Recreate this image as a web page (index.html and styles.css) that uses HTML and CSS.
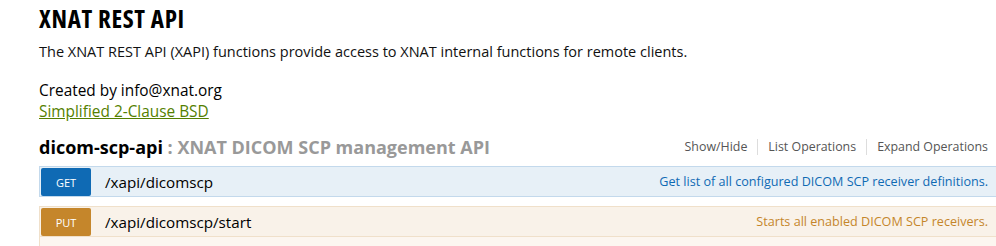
FILE: index.html
```html
<!DOCTYPE html>
<html>
<head>
<meta charset="utf-8">
<link rel="stylesheet" href="styles.css">
</head>
<body>
<div class="wrap">
  <div class="info">
    <div class="info-title">XNAT REST API</div>
    <div class="info-desc">The XNAT REST API (XAPI) functions provide access to XNAT internal functions for remote clients.</div>
    <div class="info-meta">
      <div>Created by info@xnat.org</div>
      <a class="license" href="#">Simplified 2-Clause BSD</a>
    </div>
  </div>
  <div class="resource">
    <div class="heading">
      <h2><a class="res-name" href="#">dicom-scp-api</a> : XNAT DICOM SCP management API</h2>
      <ul class="options">
        <li>Show/Hide</li>
        <li>List Operations</li>
        <li>Expand Operations</li>
      </ul>
    </div>
    <div class="op get">
      <div class="op-head">
        <span class="method">GET</span>
        <span class="path">/xapi/dicomscp</span>
        <span class="summary">Get list of all configured DICOM SCP receiver definitions.</span>
      </div>
    </div>
    <div class="op put">
      <div class="op-head">
        <span class="method">PUT</span>
        <span class="path">/xapi/dicomscp/start</span>
        <span class="summary">Starts all enabled DICOM SCP receivers.</span>
      </div>
      <div class="op-body"></div>
    </div>
  </div>
</div>
</body>
</html>
```

FILE: styles.css
```css
html, body {
  margin: 0;
  padding: 0;
  background: #fff;
  overflow: hidden;
}
body {
  font-family: "Open Sans", "DejaVu Sans", sans-serif;
  color: #000;
}
.wrap {
  padding-left: 39px;
  padding-top: 3px;
}
.info-title {
  font-size: 25px;
  font-weight: bold;
  line-height: 30px;
  font-stretch: 87.5%;
  letter-spacing: 0.65px;
}
.info-desc {
  font-size: 14.5px;
  line-height: 20px;
  margin-top: 9px;
  color: #111;
}
.info-meta {
  margin-top: 18px;
  font-size: 15.4px;
  line-height: 21px;
}
.license {
  color: #547f00;
  text-decoration: underline;
}
.heading {
  display: flex;
  align-items: center;
  justify-content: space-between;
  padding-right: 8px;
  margin-top: 11px;
  height: 28px;
}
.heading h2 {
  margin: 0;
  font-size: 18px;
  font-weight: bold;
  color: #999;
}
.res-name {
  color: #000;
  text-decoration: none;
}
.options {
  list-style: none;
  margin: 0;
  padding: 0;
  display: flex;
  font-size: 12.4px;
  color: #555;
}
.options li {
  padding: 0 10px;
  border-right: 1px solid #ddd;
  line-height: 16px;
}
.options li:last-child {
  border-right: none;
  padding-right: 0;
}
.op {
  margin-top: 9px;
}
.heading + .op {
  margin-top: 5px;
}
.op-head {
  display: flex;
  align-items: center;
  height: 29px;
  padding: 0 28px 0 1px;
  margin-right: -20px;
  border: 1px solid;
  border-right: none;
}
.method {
  width: 50px;
  height: 28px;
  border-radius: 2px;
  color: #fff;
  font-size: 11px;
  display: flex;
  align-items: center;
  justify-content: center;
  padding-top: 1px;
  box-sizing: border-box;
}
.path {
  font-size: 15.2px;
  padding-left: 14px;
  flex: 1;
}
.summary {
  font-size: 12.6px;
}
.get .op-head {
  background: #e7f0f7;
  border-color: #c3d9ec;
}
.get .method { background: #0f6ab4; }
.get .summary { color: #0f6ab4; }
.put .op-head {
  background: #f9f2e9;
  border-color: #f0e0ca;
}
.put .method { background: #c5862b; }
.put .summary { color: #c5862b; }
.op-body {
  height: 20px;
  background: #fcf6f0;
  border-left: 1px solid #f0e0ca;
}
```
